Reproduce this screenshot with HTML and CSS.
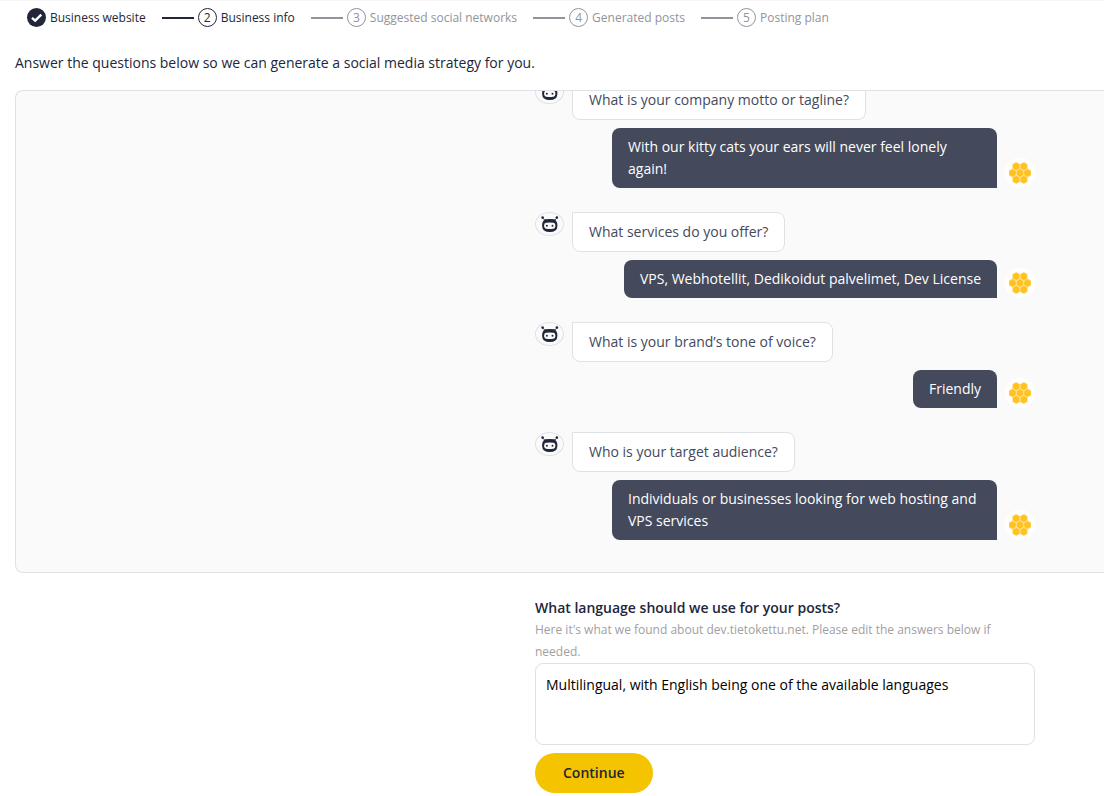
FILE: index.html
```html
<!DOCTYPE html>
<html lang="en">
<head>
<meta charset="utf-8">
<meta name="viewport" content="width=device-width, initial-scale=1">
<title>Business info</title>
<link rel="stylesheet" href="styles.css">
</head>
<body>
<svg class="symbols" aria-hidden="true">
  <symbol id="bot" viewBox="0 0 18 18">
    <circle cx="1.600" cy="2.600" r="1.300"/>
    <circle cx="15.900" cy="2.600" r="1.300"/>
    <path d="M1.800 3 4 5.500M15.700 3 13.500 5.500" stroke="currentColor" stroke-width=".8"/>
    <path fill-rule="evenodd" d="M4 4.300Q8.800 3.900 13.500 4.300Q16.600 6.500 16.400 11Q16.200 17 8.800 17Q1.300 17 1.100 11Q.9 6.500 4 4.300ZM5 7.700Q3.100 7.900 3.100 10.500Q3.100 13.500 5.300 13.800Q8.800 14.200 12.200 13.800Q14.400 13.500 14.400 10.500Q14.400 7.900 12.500 7.700Q8.800 7.300 5 7.700Z"/>
    <circle cx="5.900" cy="10.700" r="1"/>
    <circle cx="11.500" cy="10.700" r="1"/>
  </symbol>
  <symbol id="comb" viewBox="0 0 22 22">
    <g stroke="#ffe291" stroke-width=".5">
      <path id="cell" d="M11 6.800 14.600 8.900V13.100L11 15.200 7.400 13.100V8.900Z"/>
      <use href="#cell" x="-7.500"/>
      <use href="#cell" x="7.500"/>
      <use href="#cell" x="-3.800" y="-6.600"/>
      <use href="#cell" x="3.800" y="-6.600"/>
      <use href="#cell" x="-3.800" y="6.600"/>
      <use href="#cell" x="3.800" y="6.600"/>
    </g>
  </symbol>
</svg>
<main class="page">
  <ol class="steps">
    <li class="step active"><span class="badge done"><svg viewBox="0 0 19 19" aria-hidden="true"><path d="M5 9.800 8.200 12.700 14.300 6.700" fill="none" stroke="#fff" stroke-width="2.400"/></svg></span>Business website</li>
    <li class="step active"><span class="badge">2</span>Business info</li>
    <li class="step"><span class="badge">3</span>Suggested social networks</li>
    <li class="step"><span class="badge">4</span>Generated posts</li>
    <li class="step"><span class="badge">5</span>Posting plan</li>
  </ol>
  <p class="intro">Answer the questions below so we can generate a social media strategy for you.</p>
  <section class="panel" aria-label="Conversation">
    <div class="column chat">
      <div class="exchange">
        <div class="question"><span class="bot"><svg><use href="#bot"/></svg></span><p class="bubble">What is your company motto or tagline?</p></div>
        <div class="answer"><p class="bubble">With our kitty cats your ears will never feel lonely again!</p><span class="user"><svg><use href="#comb"/></svg></span></div>
      </div>
      <div class="exchange">
        <div class="question"><span class="bot"><svg><use href="#bot"/></svg></span><p class="bubble">What services do you offer?</p></div>
        <div class="answer"><p class="bubble">VPS, Webhotellit, Dedikoidut palvelimet, Dev License</p><span class="user"><svg><use href="#comb"/></svg></span></div>
      </div>
      <div class="exchange">
        <div class="question"><span class="bot"><svg><use href="#bot"/></svg></span><p class="bubble">What is your brand’s tone of voice?</p></div>
        <div class="answer"><p class="bubble">Friendly</p><span class="user"><svg><use href="#comb"/></svg></span></div>
      </div>
      <div class="exchange">
        <div class="question"><span class="bot"><svg><use href="#bot"/></svg></span><p class="bubble">Who is your target audience?</p></div>
        <div class="answer"><p class="bubble">Individuals or businesses looking for web hosting and VPS services</p><span class="user"><svg><use href="#comb"/></svg></span></div>
      </div>
    </div>
  </section>
  <form class="column form">
    <label class="label" for="language">What language should we use for your posts?</label>
    <p class="hint" id="hint">Here it's what we found about dev.tietokettu.net. Please edit the answers below if needed.</p>
    <textarea class="field" id="language" aria-describedby="hint">Multilingual, with English being one of the available languages</textarea>
    <button class="button" type="button">Continue</button>
  </form>
</main>
</body>
</html>
```

FILE: styles.css
```css
* {
  box-sizing: border-box;
}

body {
  margin: 0;
  background: #fff;
  color: #22263a;
  font: 14px/22px "Open Sans", "Noto Sans", sans-serif;
}

p {
  margin: 0;
}

svg {
  display: block;
  fill: currentColor;
}

.symbols {
  position: absolute;
  width: 0;
  height: 0;
}

.page {
  border-top: 1px solid #f7f7f7;
  padding: 7px 0 0 15px;
  overflow: hidden;
}

.steps {
  display: flex;
  gap: 16px;
  margin: 0 0 25px;
  padding: 0 12px;
  list-style: none;
  font-size: 12px;
  line-height: 19px;
}

.step {
  display: flex;
  align-items: center;
  gap: 4px;
  color: #92949c;
  white-space: nowrap;
}

.step.active {
  color: #22263a;
}

.step + .step::before {
  content: "";
  width: 32px;
  height: 2px;
  background: currentColor;
}

.badge {
  width: 19px;
  height: 19px;
  border: 1px solid currentColor;
  border-radius: 50%;
  line-height: 17px;
  text-align: center;
}

.badge.done {
  border: 0;
  background: #22263a;
}

.intro {
  margin-bottom: 16px;
}

.panel {
  display: flex;
  flex-direction: column;
  justify-content: flex-end;
  height: calc(100vh - 313px);
  min-height: 200px;
  overflow: hidden;
  border: 1px solid #dfe1e6;
  border-right: 0;
  border-radius: 8px 0 0 8px;
  background: #fafafa;
}

.column {
  width: 100%;
  max-width: 569px;
  margin-left: auto;
  padding-right: 69px;
}

.chat {
  display: flex;
  flex-direction: column;
  gap: 24px;
  padding-bottom: 32px;
}

.exchange {
  display: flex;
  flex-direction: column;
  gap: 8px;
}

.question,
.answer {
  display: flex;
  gap: 8px;
}

.answer {
  align-items: flex-end;
  justify-content: flex-end;
}

.bubble {
  padding: 8px 16px;
  border-radius: 8px;
}

.question .bubble {
  border: 1px solid #dfe1e6;
  border-top-left-radius: 0;
  background: #fff;
  color: #44495c;
}

.answer .bubble {
  max-width: 77%;
  border-bottom-right-radius: 0;
  background: #44495c;
  color: #fff;
}

.bot,
.user {
  display: grid;
  flex: none;
  place-items: center;
  border-radius: 50%;
}

.bot {
  width: 29px;
  height: 24px;
  border: 1px solid #dfe1e6;
}

.bot svg {
  width: 18px;
  height: 18px;
}

.user {
  width: 30px;
  height: 30px;
  background: #fff;
  color: #ffc222;
}

.user svg {
  width: 22px;
  height: 22px;
}

.form {
  display: flex;
  flex-direction: column;
  padding-top: 24px;
}

.label {
  font-weight: 600;
}

.hint {
  color: #a0a0a0;
  font-size: 12px;
}

.field {
  height: 82px;
  margin-bottom: 8px;
  padding: 10px;
  border: 1px solid #dfe1e6;
  border-radius: 8px;
  background: #fff;
  color: #000;
  font: inherit;
  resize: none;
}

.button {
  align-self: flex-start;
  height: 40px;
  padding: 0 28px;
  border: 0;
  border-radius: 20px;
  background: #f5c400;
  color: #22263a;
  font: inherit;
  font-weight: 600;
}
```
